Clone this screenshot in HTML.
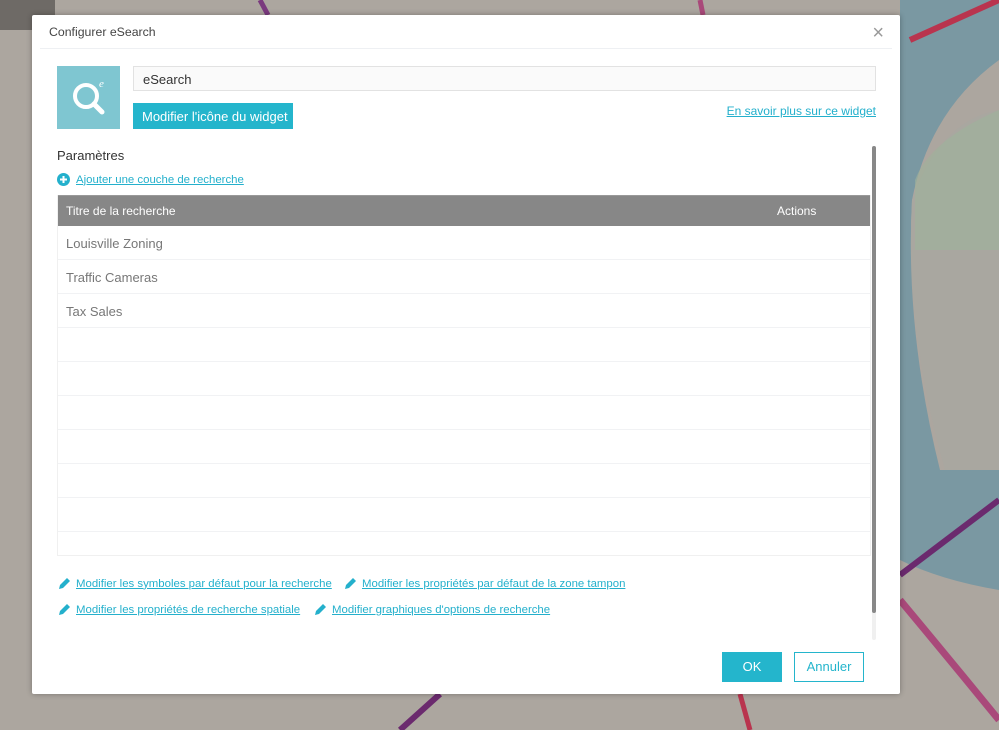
<!DOCTYPE html>
<html><head><meta charset="utf-8"><style>
*{box-sizing:border-box;margin:0;padding:0}
body{width:999px;height:730px;overflow:hidden;position:relative;font-family:"Liberation Sans",sans-serif;background:#aca69f}
.bg{position:absolute;left:0;top:0}
.dlg{position:absolute;left:32px;top:15px;width:868px;height:679px;background:#fff;border-radius:2px;box-shadow:0 0 6px rgba(0,0,0,.3)}
.title{position:absolute;left:17px;top:10px;font-size:12.3px;color:#444}
.close{position:absolute;right:16px;top:7px;font-size:20px;color:#999}
.hr{position:absolute;left:8px;right:8px;top:33px;border-top:1px solid #eef0f3}
.icon{position:absolute;left:25px;top:51px;width:63px;height:63px;background:#7fc6d1}
.inp{position:absolute;left:101px;top:51px;width:743px;height:25px;border:1px solid #e2e2e2;background:#fafafa;font-size:13px;color:#333;padding:5px 9px}
.btn{position:absolute;left:101px;top:88px;width:160px;height:26px;background:#24b5cc;color:#fff;font-size:13px;padding:6px 9px;white-space:nowrap}
a{color:#24b0cc;text-decoration:underline;font-size:11.4px;white-space:nowrap}
.more{position:absolute;right:24px;top:89px;font-size:12px}
.par{position:absolute;left:25px;top:133px;font-size:13px;color:#333}
.add{position:absolute;left:25px;top:158px;display:flex;align-items:center;gap:6px}
.tbl{position:absolute;left:25px;top:180px;width:814px;height:361px;border:1px solid #f0f0f0;border-top:none}
.th{height:31px;background:#878787;color:#fff;font-size:12px;position:relative;border-top:1px solid #999}
.th span{position:absolute;top:8px}
.row{height:34px;border-bottom:1px solid #f1f2f4;font-size:13px;color:#777;padding:10px 8px 8px}
.sb{position:absolute;left:840px;top:131px;width:4px;height:467px;background:#888;border-radius:2px}
.sbt{position:absolute;left:840px;top:131px;width:4px;height:494px;background:#f0f0f0;border-radius:2px}
.lk{position:absolute;display:flex;align-items:center;gap:5px}
.ok{position:absolute;left:690px;top:637px;width:60px;height:30px;background:#24b5cc;color:#fff;font-size:13px;text-align:center;line-height:30px}
.an{position:absolute;left:762px;top:637px;width:70px;height:30px;border:1px solid #24b5cc;color:#24b5cc;font-size:13px;text-align:center;line-height:28px}
</style></head><body>
<svg class="bg" width="999" height="730">
<rect width="999" height="730" fill="#aca69f"/>
<path d="M900 0 L999 0 L999 60 Q930 110 912 200 Q905 330 940 470 L999 470 L999 590 Q940 580 900 560 Z" fill="#7a98a2"/>
<path d="M912 200 Q905 330 945 470 L999 470 L999 110 Q940 120 912 200Z" fill="#a9a7a0"/>
<path d="M915 180 Q930 140 999 110 L999 250 L915 250Z" fill="#9fb39b" opacity=".6"/>
<path d="M910 40 L999 0" stroke="#b9344e" stroke-width="6"/>
<path d="M900 575 L999 500" stroke="#6b2a6e" stroke-width="6"/>
<path d="M900 600 Q950 660 999 720" stroke="#a9497a" stroke-width="7" fill="none"/>
<path d="M400 730 L440 694" stroke="#6b2a6e" stroke-width="6"/>
<path d="M740 694 L750 730" stroke="#b9344e" stroke-width="5"/>
<path d="M260 0 L268 15" stroke="#7a3a7e" stroke-width="5"/>
<path d="M700 0 L703 15" stroke="#a9497a" stroke-width="5"/>
<rect x="0" y="0" width="55" height="30" fill="#6e6a66"/>
</svg>
<div class="dlg">
<div class="title">Configurer eSearch</div>
<div class="close">×</div>
<div class="hr"></div>
<div class="icon"><svg width="63" height="63"><circle cx="29" cy="30" r="11" stroke="#fff" stroke-width="4" fill="none"/><path d="M37 38 L45 46" stroke="#fff" stroke-width="5" stroke-linecap="round"/><text x="42" y="21" font-size="11" font-style="italic" fill="#fff" font-family="Liberation Serif">e</text></svg></div>
<div class="inp">eSearch</div>
<div class="btn">Modifier l'icône du widget</div>
<a class="more">En savoir plus sur ce widget</a>
<div class="par">Paramètres</div>
<div class="add"><svg width="13" height="13"><circle cx="6.5" cy="6.5" r="6.5" fill="#24b0cc"/><path d="M6.5 3v7M3 6.5h7" stroke="#fff" stroke-width="2"/></svg><a>Ajouter une couche de recherche</a></div>
<div class="tbl">
<div class="th"><span style="left:8px">Titre de la recherche</span><span style="left:719px">Actions</span></div>
<div class="row">Louisville Zoning</div>
<div class="row">Traffic Cameras</div>
<div class="row">Tax Sales</div>
<div class="row"></div><div class="row"></div><div class="row"></div><div class="row"></div><div class="row"></div><div class="row"></div><div class="row" style="border:none"></div>
</div>
<div class="sbt"></div><div class="sb"></div>
<div class="lk" style="left:26px;top:562px"><svg width="13" height="13"><path d="M1 12l1-4 7-7 3 3-7 7z" fill="#24b0cc"/></svg><a>Modifier les symboles par défaut pour la recherche</a></div>
<div class="lk" style="left:312px;top:562px"><svg width="13" height="13"><path d="M1 12l1-4 7-7 3 3-7 7z" fill="#24b0cc"/></svg><a>Modifier les propriétés par défaut de la zone tampon</a></div>
<div class="lk" style="left:26px;top:588px"><svg width="13" height="13"><path d="M1 12l1-4 7-7 3 3-7 7z" fill="#24b0cc"/></svg><a>Modifier les propriétés de recherche spatiale</a></div>
<div class="lk" style="left:282px;top:588px"><svg width="13" height="13"><path d="M1 12l1-4 7-7 3 3-7 7z" fill="#24b0cc"/></svg><a>Modifier graphiques d'options de recherche</a></div>
<div class="ok">OK</div>
<div class="an">Annuler</div>
</div>
</body></html>
